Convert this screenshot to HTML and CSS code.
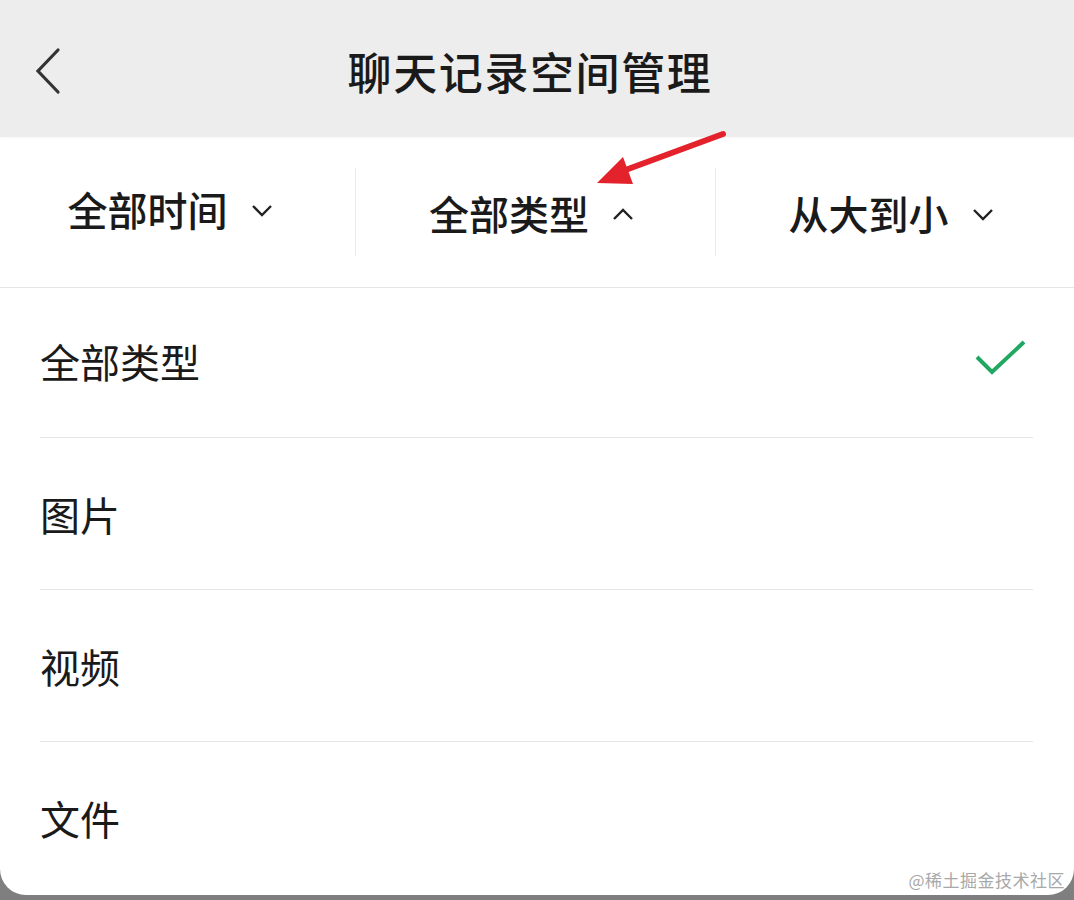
FILE: index.html
```html
<!DOCTYPE html>
<html lang="zh-CN">
<head>
  <meta charset="UTF-8">
  <title>聊天记录空间管理</title>
  <link rel="stylesheet" href="styles.css">
</head>
<body>

<div class="screen">
  <div class="header">
    <div class="back">
      <svg width="30" height="50" viewBox="0 0 30 50">
        <polyline points="24,4 4,25 24,46" fill="none" stroke="#333" stroke-width="3.2" stroke-linecap="round" stroke-linejoin="miter"/>
      </svg>
    </div>
    <h1 class="title">聊天记录空间管理</h1>
    <div></div>
  </div>

  <div class="filters">
    <div class="filter filter-first">
      <span>全部时间</span>
      <svg class="caret" width="22" height="13" viewBox="0 0 22 13">
        <polyline points="2,2 11,11 20,2" fill="none" stroke="#222" stroke-width="2.4"/>
      </svg>
    </div>
    <div class="filter">
      <span>全部类型</span>
      <svg class="caret" width="22" height="13" viewBox="0 0 22 13">
        <polyline points="2,11 11,2 20,11" fill="none" stroke="#222" stroke-width="2.4"/>
      </svg>
    </div>
    <div class="filter">
      <span>从大到小</span>
      <svg class="caret" width="22" height="13" viewBox="0 0 22 13">
        <polyline points="2,2 11,11 20,2" fill="none" stroke="#222" stroke-width="2.4"/>
      </svg>
    </div>
  </div>

  <ul class="types">
    <li class="type">
      <span>全部类型</span>
      <svg width="54" height="40" viewBox="0 0 54 40">
        <polyline points="3,18 18,33 50,3" fill="none" stroke="#20a862" stroke-width="4"/>
      </svg>
    </li>
    <li class="type"><span>图片</span></li>
    <li class="type"><span>视频</span></li>
    <li class="type"><span>文件</span></li>
  </ul>

  <div class="watermark">@稀土掘金技术社区</div>

  <!-- red annotation arrow -->
  <svg class="arrow" width="140" height="70" viewBox="0 0 140 70">
    <line x1="133" y1="8" x2="30" y2="46" stroke="#e3222b" stroke-width="6" stroke-linecap="round"/>
    <polygon points="7,57 33,31 43,58" fill="#e3222b"/>
  </svg>
</div>

</body>
</html>
```

FILE: styles.css
```css
* {
  box-sizing: border-box;
}

body {
  margin: 0;
  background: #7f7f7f;
  font-family: "Noto Sans CJK SC", "Noto Sans", sans-serif;
  color: #1a1a1a;
}

.screen {
  position: relative;
  width: 1074px;
  height: 895px;
  background: white;
  border-radius: 0 0 26px 26px;
  overflow: hidden;
}

.header {
  height: 137px;
  background: #ededed;
  display: grid;
  grid-template-columns: 1fr auto 1fr;
  align-items: center;
  box-shadow: 0 1px 3px rgba(0,0,0,0.04);
}

.back {
  padding-left: 34px;
  padding-top: 4px;
  display: flex;
}

.title {
  margin: 0 14px 0 0;
  font-size: 44px;
  font-weight: 500;
  line-height: 1;
  letter-spacing: 1.6px;
  padding-top: 4px;
  color: #1a1a1a;
}

.filters {
  height: 151px;
  display: grid;
  grid-template-columns: 355px 360px 1fr;
  align-items: center;
  border-bottom: 1px solid #e6e6e6;
}

.filter {
  height: 88px;
  display: flex;
  align-items: center;
  justify-content: center;
  gap: 23px;
  font-size: 40px;
  font-weight: 500;
  border-left: 1px solid #ebebeb;
  padding-top: 2px;
  padding-right: 8px;
}

.filter-first {
  border-left: none;
  padding-top: 0;
  padding-bottom: 6px;
  padding-right: 15px;
}

.filter span {
  line-height: 1;
}

.caret {
  margin-top: 2px;
}

.types {
  list-style: none;
  margin: 0;
  padding: 0 41px 0 40px;
}

.type {
  height: 152px;
  display: flex;
  align-items: center;
  justify-content: space-between;
  font-size: 40px;
  border-bottom: 1px solid #e6e6e6;
}

.type:first-child {
  height: 150px;
  padding-bottom: 3px;
}

.type:last-child {
  border-bottom: none;
}

.type span {
  line-height: 1;
}

.type svg {
  margin-right: 5px;
  margin-bottom: 4px;
}

.watermark {
  position: absolute;
  right: 9px;
  bottom: 3px;
  font-size: 17px;
  color: #a8a8a8;
  letter-spacing: 0.5px;
}

.arrow {
  position: absolute;
  left: 590px;
  top: 126px;
}
```
